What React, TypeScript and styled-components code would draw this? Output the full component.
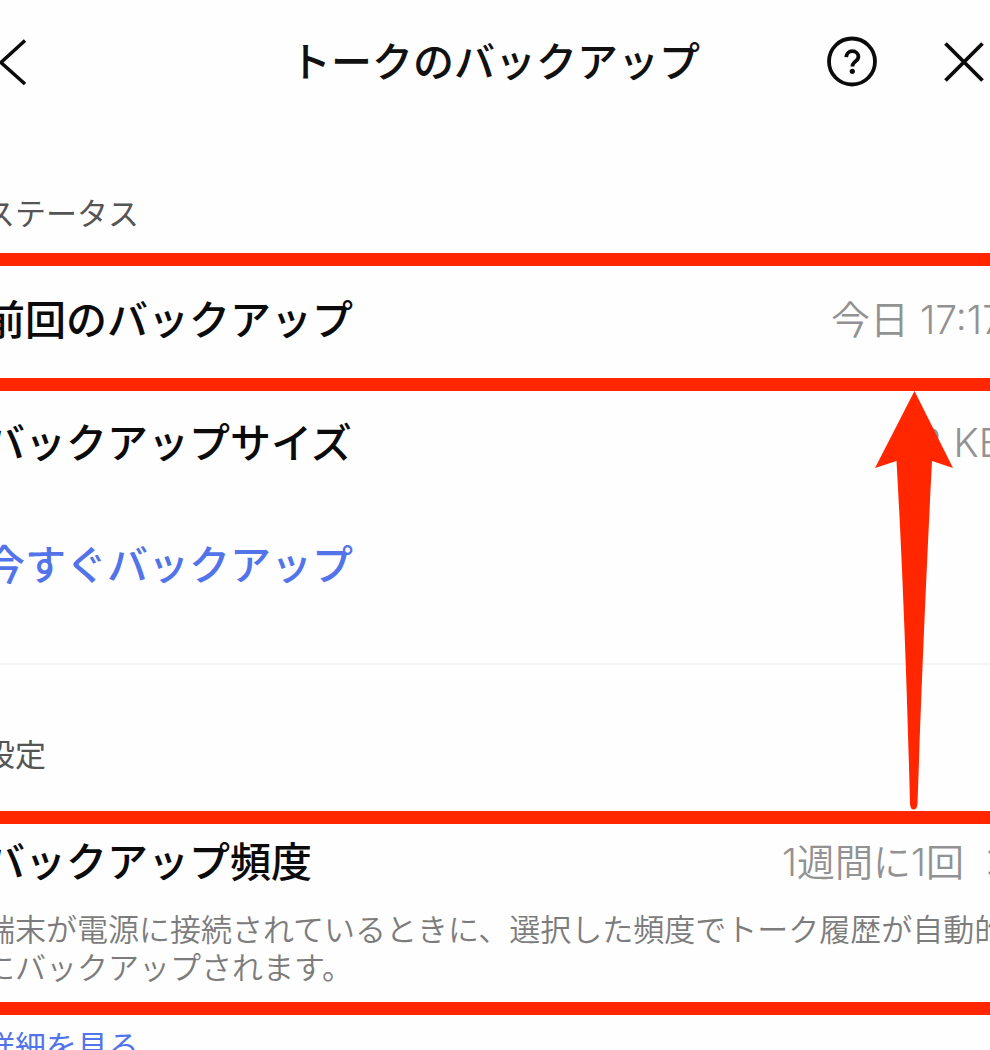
import React from "react";
import styled, { createGlobalStyle } from "styled-components";

const GlobalStyle = createGlobalStyle`
  body {
    margin: 0;
    background: #fefefe;
    color: #0b0b0b;
    font-family: Inter, "Noto Sans CJK JP", sans-serif;
  }
`;

const Page = styled.main`
  position: relative;
  min-height: 100vh;
  max-height: 100vh;
  overflow: hidden;
`;

const Header = styled.header`
  display: grid;
  grid-template-columns: 1fr auto 1fr;
  align-items: center;
  height: 124px;
`;

const Title = styled.h1`
  margin: 0;
  font-size: 41px;
  line-height: 58px;
  font-weight: 500;
  color: #111;
`;

const Actions = styled.div`
  display: flex;
  justify-content: flex-end;
  align-items: center;
  gap: 66px;
  padding-right: 6px;
`;

const IconButton = styled.button`
  display: flex;
  justify-self: start;
  padding: 0;
  border: 0;
  background: none;
  color: #0b0b0b;
`;

/* The sheet is wider than the window: both edges run out of view. */
const Section = styled.section`
  margin: 0 -18px 0 -16px;
`;

const SectionTitle = styled.h2`
  margin: 0;
  padding: 67px 0 16px;
  font-size: 31px;
  line-height: 46px;
  font-weight: 400;
  color: #555;
`;

const Highlight = styled.div<{ $tall?: boolean }>`
  margin-top: ${(p) => (p.$tall ? 17 : 0)}px;
  padding: ${(p) => (p.$tall ? "9px 0 15px" : "25px 0 29px")};
  border: 13px solid #ff2600;
  border-width: 13px 0;
`;

const Row = styled.div`
  display: flex;
  justify-content: space-between;
  align-items: center;
  height: 58px;
`;

const List = styled.div`
  display: flex;
  flex-direction: column;
  gap: 64px;
  padding: 23px 0 69px;
  border-bottom: 2px solid #f4f4f4;
`;

const Label = styled.label`
  font-size: 41px;
  line-height: 58px;
  font-weight: 500;
`;

const Value = styled.span`
  padding-right: 4px;
  font-size: 39px;
  line-height: 58px;
  font-weight: 350;
  color: #929292;
`;

const Picker = styled.div`
  display: flex;
  align-items: center;
  gap: 24px;
  color: #929292;
`;

const Select = styled.select`
  appearance: none;
  padding: 0;
  border: 0;
  background: none;
  color: inherit;
  font: 350 38px/58px Inter, "Noto Sans CJK JP", sans-serif;
`;

const Action = styled.button`
  padding: 0;
  border: 0;
  background: none;
  color: #5274e8;
  font: 500 41px/58px Inter, "Noto Sans CJK JP", sans-serif;
`;

const Description = styled.p`
  margin: 20px 0 0;
  font-size: 31px;
  line-height: 38px;
  font-weight: 350;
  color: #7c7c7c;
`;

const MoreLink = styled.a`
  display: block;
  padding-top: 9px;
  font-size: 31px;
  line-height: 46px;
  color: #5274e8;
  text-decoration: none;
`;

const Arrow = styled.svg`
  position: absolute;
  top: 391px;
  right: 37px;
`;

export default function App() {
  return (
    <Page>
      <GlobalStyle />
      <Header>
        <IconButton type="button" aria-label="戻る">
          <svg width="27" height="48" viewBox="0 0 27 48" fill="none" stroke="currentColor" strokeWidth="3.5">
            <path d="M25 2.5 1 24.5 25 46" />
          </svg>
        </IconButton>
        <Title>トークのバックアップ</Title>
        <Actions>
          <IconButton type="button" aria-label="ヘルプ">
            <svg width="52" height="52" viewBox="0 0 52 52" fill="none" stroke="currentColor" strokeWidth="3.8">
              <circle cx="26" cy="25.5" r="23" />
              <path d="M20.2 21.2c.3-3.8 2.8-6 6.1-6 3.5 0 6.1 2.4 6.1 5.5 0 4.8-6 4.6-6 9.8" />
              <circle cx="26.3" cy="35.3" r="2.6" fill="currentColor" stroke="none" />
            </svg>
          </IconButton>
          <IconButton type="button" aria-label="閉じる">
            <svg width="40" height="40" viewBox="0 0 40 40" fill="none" stroke="currentColor" strokeWidth="3.8">
              <path d="M1.500 1.500 38.500 38.500M38.500 1.500 1.500 38.500" />
            </svg>
          </IconButton>
        </Actions>
      </Header>

      <Section>
        <SectionTitle>ステータス</SectionTitle>
        <Highlight>
          <Row>
            <Label as="span">前回のバックアップ</Label>
            <Value>今日 17:17</Value>
          </Row>
        </Highlight>
        <List>
          <Row>
            <Label as="span">バックアップサイズ</Label>
            <Value>1.2 KB</Value>
          </Row>
          <Row>
            <Action type="button">今すぐバックアップ</Action>
          </Row>
        </List>
      </Section>

      <Section>
        <SectionTitle>設定</SectionTitle>
        <Highlight $tall>
          <Row>
            <Label htmlFor="frequency">バックアップ頻度</Label>
            <Picker>
              <Select id="frequency">
                <option>1週間に1回</option>
              </Select>
              <svg width="20" height="40" viewBox="0 0 20 40" fill="none" stroke="currentColor" strokeWidth="3">
                <path d="M1 11 10 3 19 11M1 30 10 38 19 30" />
              </svg>
            </Picker>
          </Row>
          <Description>
            端末が電源に接続されているときに、選択した頻度でトーク履歴が自動的にバックアップされます。
          </Description>
        </Highlight>
        <MoreLink href="#details">詳細を見る</MoreLink>
      </Section>

      <Arrow width="78" height="419" viewBox="0 0 78 419" fill="#ff2600" aria-hidden="true">
        <path d="M39.500 0 L78 77 L57 70 C54 130 48 250 42.500 413 Q42 418.500 38.500 418.500 Q35.500 418.500 35 413 C31 250 25 130 21.500 70 L0 77 Z" />
      </Arrow>
    </Page>
  );
}
